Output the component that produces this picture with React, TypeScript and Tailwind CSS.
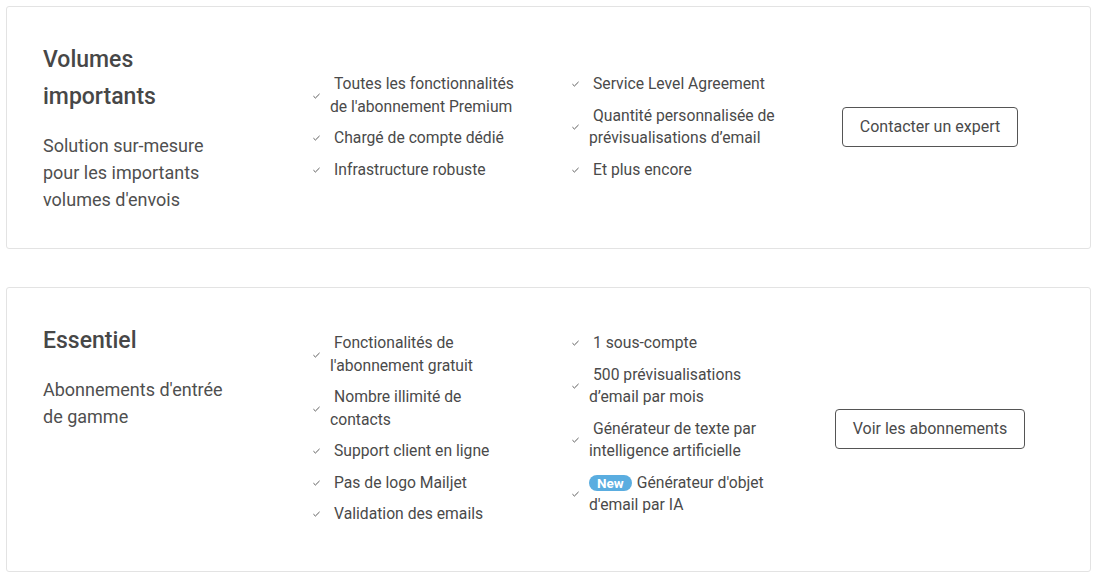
const Check = () => (
  <svg
    viewBox="0 0 8 6"
    className="w-[7px] h-[6px] shrink-0 mr-[10px]"
    fill="none"
    stroke="#555"
    strokeWidth="1.1"
  >
    <path d="M0.5 3.2 L2.8 5.3 L7.5 0.6" />
  </svg>
);

type Feature = { text: string; isNew?: boolean };

function FeatureList({ items }: { items: Feature[] }) {
  return (
    <ul className="flex flex-col gap-[9px]">
      {items.map((f) => (
        <li key={f.text} className="flex items-center">
          <Check />
          <span
            className={
              f.isNew
                ? "w-[192px] text-[15.7px] leading-[22.5px] text-[#4a4a4a]"
                : "w-[192px] indent-1 text-[15.7px] leading-[22.5px] text-[#4a4a4a]"
            }
          >
            {f.isNew && (
              <span className="inline-block rounded-full bg-[#5aade0] px-[8px] mr-[5px] text-[13.5px] leading-[16px] font-bold text-white">
                New
              </span>
            )}
            {f.text}
          </span>
        </li>
      ))}
    </ul>
  );
}

function PlanCard({
  title,
  description,
  left,
  right,
  cta,
}: {
  title: string;
  description: string;
  left: Feature[];
  right: Feature[];
  cta: string;
}) {
  return (
    <div className="border border-[#e3e3e3] rounded-[3px] bg-white pl-[36px] pt-[34px] pb-[35px]">
      <div className="flex items-center">
        <div className="w-[270px] self-start shrink-0">
          <h2 className="w-[195px] text-[23px] leading-[37px] font-medium text-[#474747]">
            {title}
          </h2>
          <p className="w-[195px] mt-[17px] text-[18px] leading-[27px] text-[#4f4f4f]">
            {description}
          </p>
        </div>
        <div className="grid grid-cols-[259px_259px] items-start py-[10px]">
          <FeatureList items={left} />
          <FeatureList items={right} />
        </div>
        <div className="w-[198px] flex justify-center">
          <button className="border border-[#555] rounded-[4px] px-[17px] py-[8px] text-[16px] leading-[22px] text-[#4a4a4a] whitespace-nowrap bg-white">
            {cta}
          </button>
        </div>
      </div>
    </div>
  );
}

export default function App() {
  return (
    <div
      className="min-h-screen bg-white pt-[6px] pl-[6px]"
      style={{ fontFamily: "Roboto, 'Liberation Sans', sans-serif" }}
    >
      <div className="w-[1085px] flex flex-col gap-[38px]">
        <PlanCard
          title="Volumes importants"
          description="Solution sur-mesure pour les importants volumes d'envois"
          left={[
            { text: "Toutes les fonctionnalités de l'abonnement Premium" },
            { text: "Chargé de compte dédié" },
            { text: "Infrastructure robuste" },
          ]}
          right={[
            { text: "Service Level Agreement" },
            { text: "Quantité personnalisée de prévisualisations d’email" },
            { text: "Et plus encore" },
          ]}
          cta="Contacter un expert"
        />
        <PlanCard
          title="Essentiel"
          description="Abonnements d'entrée de gamme"
          left={[
            { text: "Fonctionalités de l'abonnement gratuit" },
            { text: "Nombre illimité de contacts" },
            { text: "Support client en ligne" },
            { text: "Pas de logo Mailjet" },
            { text: "Validation des emails" },
          ]}
          right={[
            { text: "1 sous-compte" },
            { text: "500 prévisualisations d’email par mois" },
            { text: "Générateur de texte par intelligence artificielle" },
            { text: "Générateur d'objet d'email par IA", isNew: true },
          ]}
          cta="Voir les abonnements"
        />
      </div>
    </div>
  );
}
